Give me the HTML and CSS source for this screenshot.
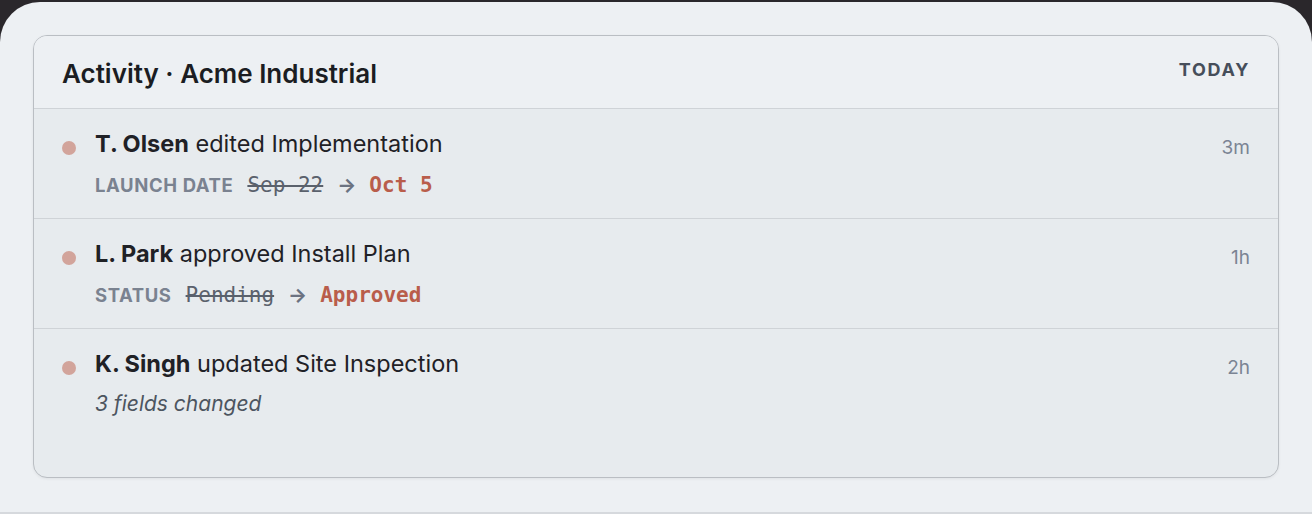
FILE: index.html
```html
<!DOCTYPE html>
<html>
<head>
<meta charset="utf-8">
<link rel="stylesheet" href="styles.css">
</head>
<body>
<div class="panel">
  <section class="card">
    <header class="card-head">
      <h1 class="title">Activity · Acme Industrial</h1>
      <span class="day">TODAY</span>
    </header>
    <div class="row">
      <span class="dot"></span>
      <div class="body">
        <div class="line"><b>T. Olsen</b> edited Implementation</div>
        <div class="change">
          <span class="field">LAUNCH DATE</span>
          <s class="old">Sep 22</s>
          <span class="arrow">→</span>
          <span class="new">Oct 5</span>
        </div>
      </div>
      <span class="time">3m</span>
    </div>
    <div class="row">
      <span class="dot"></span>
      <div class="body">
        <div class="line"><b>L. Park</b> approved Install Plan</div>
        <div class="change">
          <span class="field">STATUS</span>
          <s class="old">Pending</s>
          <span class="arrow">→</span>
          <span class="new">Approved</span>
        </div>
      </div>
      <span class="time">1h</span>
    </div>
    <div class="row last">
      <span class="dot"></span>
      <div class="body">
        <div class="line"><b>K. Singh</b> updated Site Inspection</div>
        <div class="note">3 fields changed</div>
      </div>
      <span class="time">2h</span>
    </div>
  </section>
</div>
</body>
</html>
```
FILE: styles.css
```css
html, body {
  margin: 0;
  padding: 0;
  background: #2a272b;
}
body {
  font-family: Inter, "Noto Sans", sans-serif;
  width: 1312px;
  height: 514px;
  overflow: hidden;
}
.panel {
  margin-top: 2px;
  height: 477px;
  background: #edf0f3;
  border-radius: 40px 40px 0 0;
  border-bottom: 2px solid #d6d9dd;
  padding: 33px 33px 0 33px;
}
.card {
  border: 1.5px solid #babec3;
  border-radius: 14px;
  background: #e7ebee;
  height: 441px;
  display: flex;
  flex-direction: column;
  overflow: hidden;
  box-shadow: 0 1px 3px rgba(0,0,0,0.06);
}
.card-head {
  background: #edf0f3;
  display: flex;
  align-items: center;
  justify-content: space-between;
  padding: 0 28px;
  height: 72px;
  border-bottom: 1.5px solid #cfd3d7;
  flex: none;
}
.title {
  margin: 0;
  font-size: 26px;
  font-weight: 600;
  color: #1b1d22;
  position: relative;
  top: 1px;
}
.day {
  font-size: 18px;
  font-weight: 700;
  letter-spacing: 1.7px;
  color: #464e5a;
  position: relative;
  top: -3px;
}
.row {
  display: flex;
  align-items: flex-start;
  padding: 18px 28px 0 28px;
  height: 110px;
  box-sizing: border-box;
  border-bottom: 1.5px solid #cfd3d7;
  flex: none;
}
.row.last {
  border-bottom: none;
  flex: 1;
}
.dot {
  width: 14px;
  height: 14px;
  border-radius: 50%;
  background: #d2a49b;
  margin-top: 14px;
  margin-right: 19px;
  flex: none;
}
.body {
  flex: 1;
}
.line {
  font-size: 23.5px;
  line-height: 34px;
  color: #1f2126;
}
.line b {
  font-weight: 700;
}
.change {
  margin-top: 10px;
  display: flex;
  align-items: baseline;
  gap: 14px;
  line-height: 28px;
}
.field {
  font-size: 18.5px;
  font-weight: 700;
  letter-spacing: 0.6px;
  color: #7a8290;
}
.old {
  font-family: "DejaVu Sans Mono", monospace;
  font-size: 21px;
  color: #5a616c;
  text-decoration-thickness: 1.5px;
}
.arrow {
  font-size: 20px;
  color: #6b7280;
  font-weight: 700;
  margin: 0 -1px 0 0;
}
.new {
  font-family: "DejaVu Sans Mono", monospace;
  font-size: 21px;
  font-weight: 700;
  color: #b95d4b;
}
.note {
  margin-top: 8px;
  font-size: 21px;
  font-style: italic;
  color: #4d5560;
  line-height: 30px;
}
.time {
  font-size: 19px;
  color: #7b8494;
  margin-top: 9px;
}
```
